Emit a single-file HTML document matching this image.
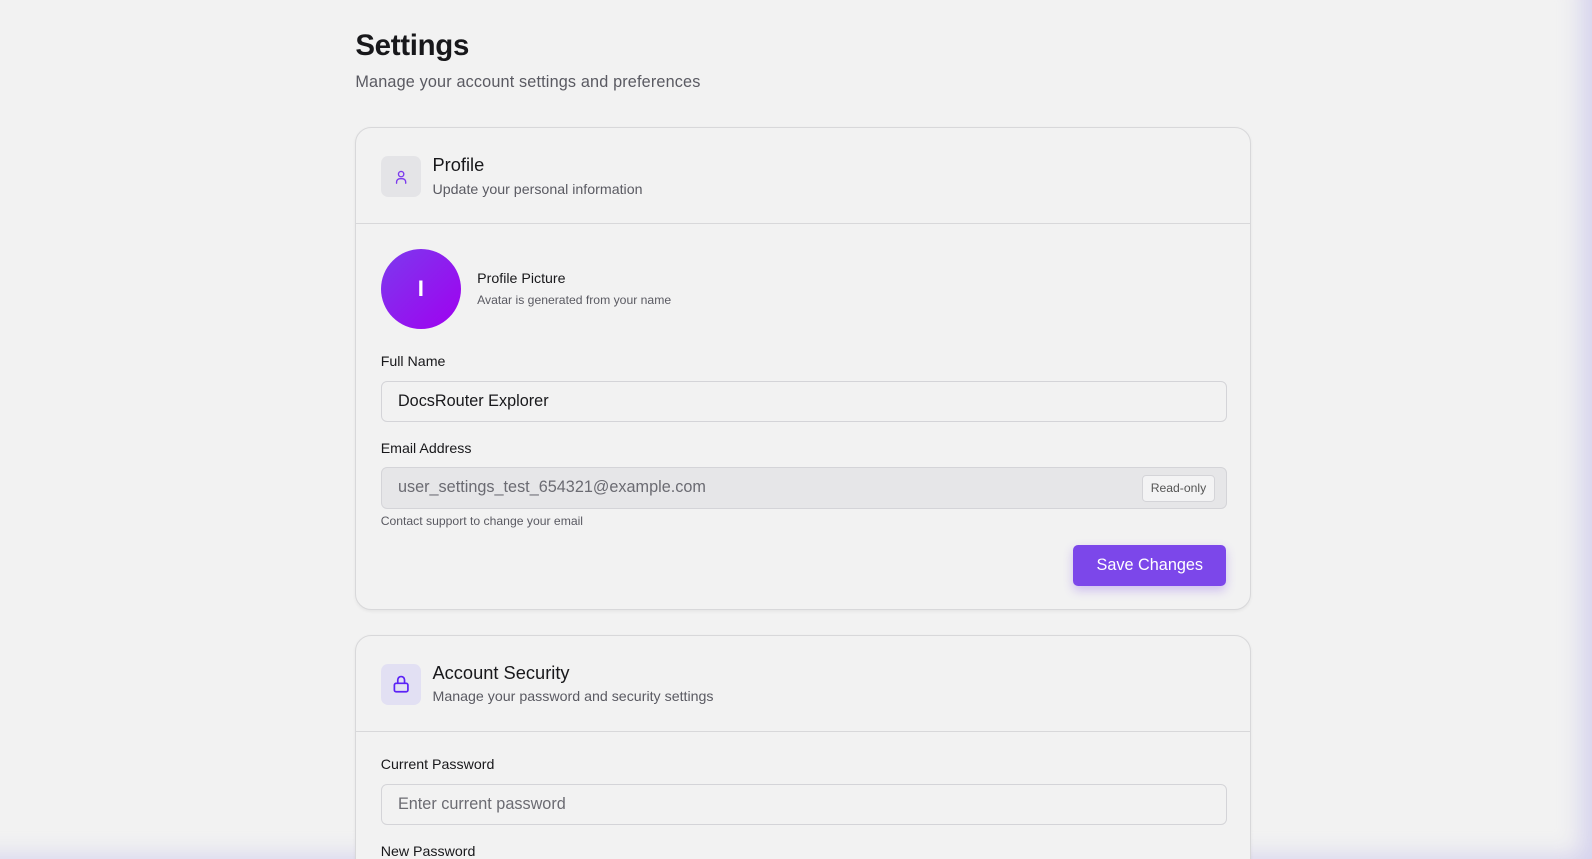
<!DOCTYPE html>
<html><head><meta charset="utf-8"><style>
*{box-sizing:border-box;margin:0;padding:0}
html,body{width:1592px;height:859px;overflow:hidden}
body{background:#f2f2f2;font-family:"Liberation Sans",sans-serif;color:#18181b;position:relative;box-shadow:inset -22px -14px 24px -12px rgba(200,195,235,.7)}
.z{position:absolute;left:0;top:0;width:1568px;height:846px;zoom:1.0153}
.wrap{position:absolute;left:350px;top:0;width:882px}
h1{position:absolute;top:29px;font-size:29px;font-weight:700;letter-spacing:-.3px}
.sub{position:absolute;top:72px;font-size:16px;color:#5a5a62;letter-spacing:.15px}
.card{position:absolute;left:0;width:882px;border:1px solid #d8d8da;border-radius:16px;background:#f2f2f2;box-shadow:0 1px 3px rgba(0,0,0,.06)}
.hd{height:95px;border-bottom:1px solid #d8d8da;position:relative}
.ic{position:absolute;left:24px;top:28px;width:40px;height:40px;border-radius:7px;background:#e4e4e7;display:flex;align-items:center;justify-content:center}
.t{position:absolute;left:75px;top:26px;font-size:18px;font-weight:500}
.d{position:absolute;left:75px;top:53px;font-size:14px;color:#5a5a62}
.lbl{position:absolute;left:24px;font-size:14px;font-weight:500}
.inp{position:absolute;left:24px;width:834px;height:41px;border:1px solid #d4d4d8;border-radius:6px;padding-left:16px;font-size:16px;line-height:39px}
</style></head><body>
<div class="z">
<div class="wrap">
<h1>Settings</h1>
<div class="sub">Manage your account settings and preferences</div>
<div class="card" style="top:125px;height:476px">
 <div class="hd"><div class="ic"><svg width="18" height="18" viewBox="0 0 24 24" fill="none" stroke="#7c3aed" stroke-width="1.8" stroke-linecap="round"><circle cx="12" cy="8" r="3.5"/><path d="M6 20v-1.5a4.5 4.5 0 0 1 4.5-4.5h3a4.5 4.5 0 0 1 4.5 4.5V20"/></svg></div>
 <div class="t">Profile</div><div class="d">Update your personal information</div></div>
 <div style="position:absolute;left:24px;top:119px;width:79px;height:79px;border-radius:50%;background:linear-gradient(135deg,#7c3aed,#a000f0);color:#fff;font-size:22px;font-weight:700;display:flex;align-items:center;justify-content:center">I</div>
 <div style="position:absolute;left:119px;top:141px;font-size:14px;font-weight:500">Profile Picture</div>
 <div style="position:absolute;left:119px;top:163px;font-size:12px;color:#5a5a62">Avatar is generated from your name</div>
 <div class="lbl" style="top:223px">Full Name</div>
 <div class="inp" style="top:249px">DocsRouter Explorer</div>
 <div class="lbl" style="top:308px">Email Address</div>
 <div class="inp" style="top:334px;background:#e6e6e8;color:#6b6b72">user_settings_test_654321@example.com
  <span style="position:absolute;right:11px;top:7px;height:26px;line-height:24px;padding:0 8px;border:1px solid #d4d4d8;border-radius:4px;background:#f3f3f4;font-size:12px;color:#555">Read-only</span></div>
 <div style="position:absolute;left:24px;top:380px;font-size:12px;color:#5a5a62">Contact support to change your email</div>
 <div style="position:absolute;left:706px;top:411px;width:151px;height:40px;border-radius:5px;background:#7c47ea;color:#fff;font-size:16px;line-height:40px;text-align:center;box-shadow:0 4px 10px rgba(124,71,234,.3)">Save Changes</div>
</div>
<div class="card" style="top:625px;height:260px">
 <div class="hd"><div class="ic" style="background:#e2e0f3"><svg width="20" height="20" viewBox="0 0 24 24" fill="none" stroke="#5b21f6" stroke-width="2" stroke-linecap="round"><rect x="4" y="11" width="16" height="10" rx="2"/><path d="M8 11V7a4 4 0 0 1 8 0v4"/></svg></div>
 <div class="t">Account Security</div><div class="d">Manage your password and security settings</div></div>
 <div class="lbl" style="top:120px">Current Password</div>
 <div class="inp" style="top:146px;color:#6b6b72">Enter current password</div>
 <div class="lbl" style="top:205px">New Password</div>
</div>
</div>
</div>
</body></html>
